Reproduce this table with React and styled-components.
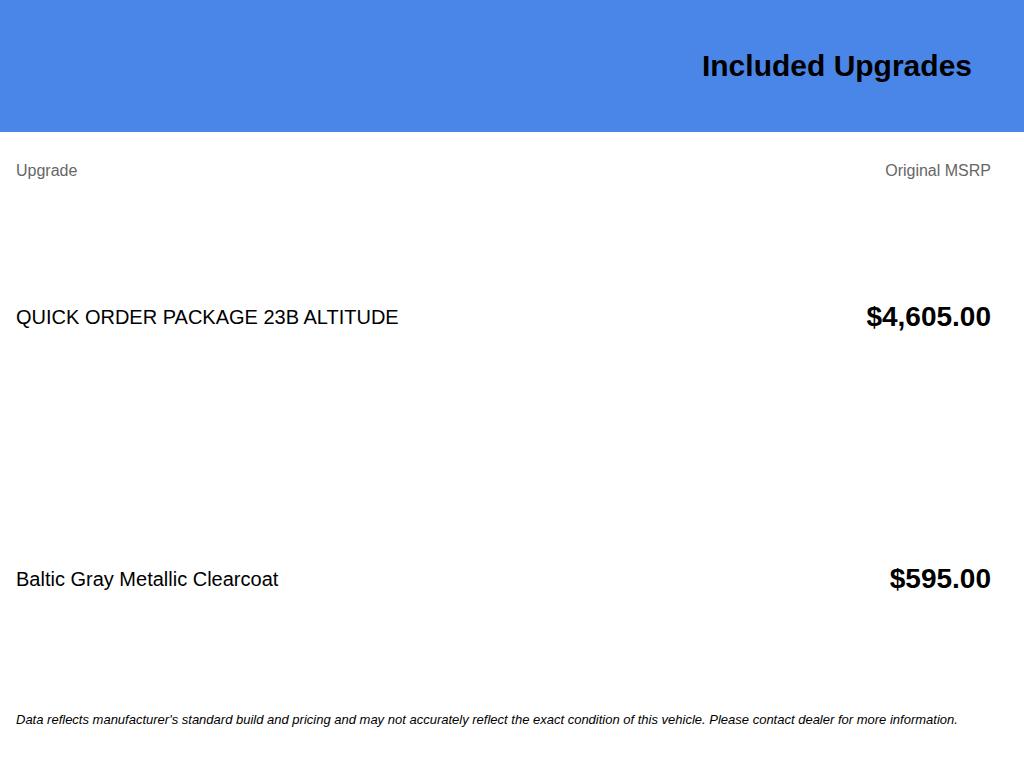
import React from 'react';
import styled, { createGlobalStyle } from 'styled-components';

const GlobalStyle = createGlobalStyle`
  body {
    margin: 0;
    background: #ffffff;
    font-family: 'Liberation Sans', Arial, sans-serif;
    color: #000000;
  }
`;

const upgrades = [
  { name: 'QUICK ORDER PACKAGE 23B ALTITUDE', price: '$4,605.00' },
  { name: 'Baltic Gray Metallic Clearcoat', price: '$595.00' },
];

const App = () => {
  return (
    <Page>
      <GlobalStyle />
      <Banner>
        <Title>Included Upgrades</Title>
      </Banner>
      <Table>
        <HeadRow>
          <span>Upgrade</span>
          <span>Original MSRP</span>
        </HeadRow>
        {upgrades.map((item) => (
          <Row key={item.name}>
            <Name>{item.name}</Name>
            <Price>{item.price}</Price>
          </Row>
        ))}
        <Disclaimer>
          Data reflects manufacturer's standard build and pricing and may not accurately reflect the
          exact condition of this vehicle. Please contact dealer for more information.
        </Disclaimer>
      </Table>
    </Page>
  );
};

export default App;

const Page = styled.div`
  width: 1024px;
  min-height: 768px;
`;

const Banner = styled.header`
  height: 132px;
  background: #4a86e8;
  display: flex;
  align-items: center;
  justify-content: flex-end;
  padding-right: 52px;
  box-sizing: border-box;
`;

const Title = styled.h1`
  margin: 0;
  font-size: 30px;
  font-weight: 700;
  color: #000;
`;

const Table = styled.section`
  padding: 0 33px 0 16px;
`;

const HeadRow = styled.div`
  height: 54px;
  display: flex;
  align-items: center;
  justify-content: space-between;
  padding-top: 24px;
  box-sizing: border-box;
  font-size: 16px;
  color: #666666;
`;

const Row = styled.div`
  height: 262px;
  display: flex;
  align-items: center;
  justify-content: space-between;
`;

const Name = styled.span`
  font-size: 20px;
`;

const Price = styled.span`
  font-size: 28px;
  font-weight: 700;
`;

const Disclaimer = styled.p`
  margin: 0;
  padding-top: 2px;
  font-size: 13px;
  font-style: italic;
`;
